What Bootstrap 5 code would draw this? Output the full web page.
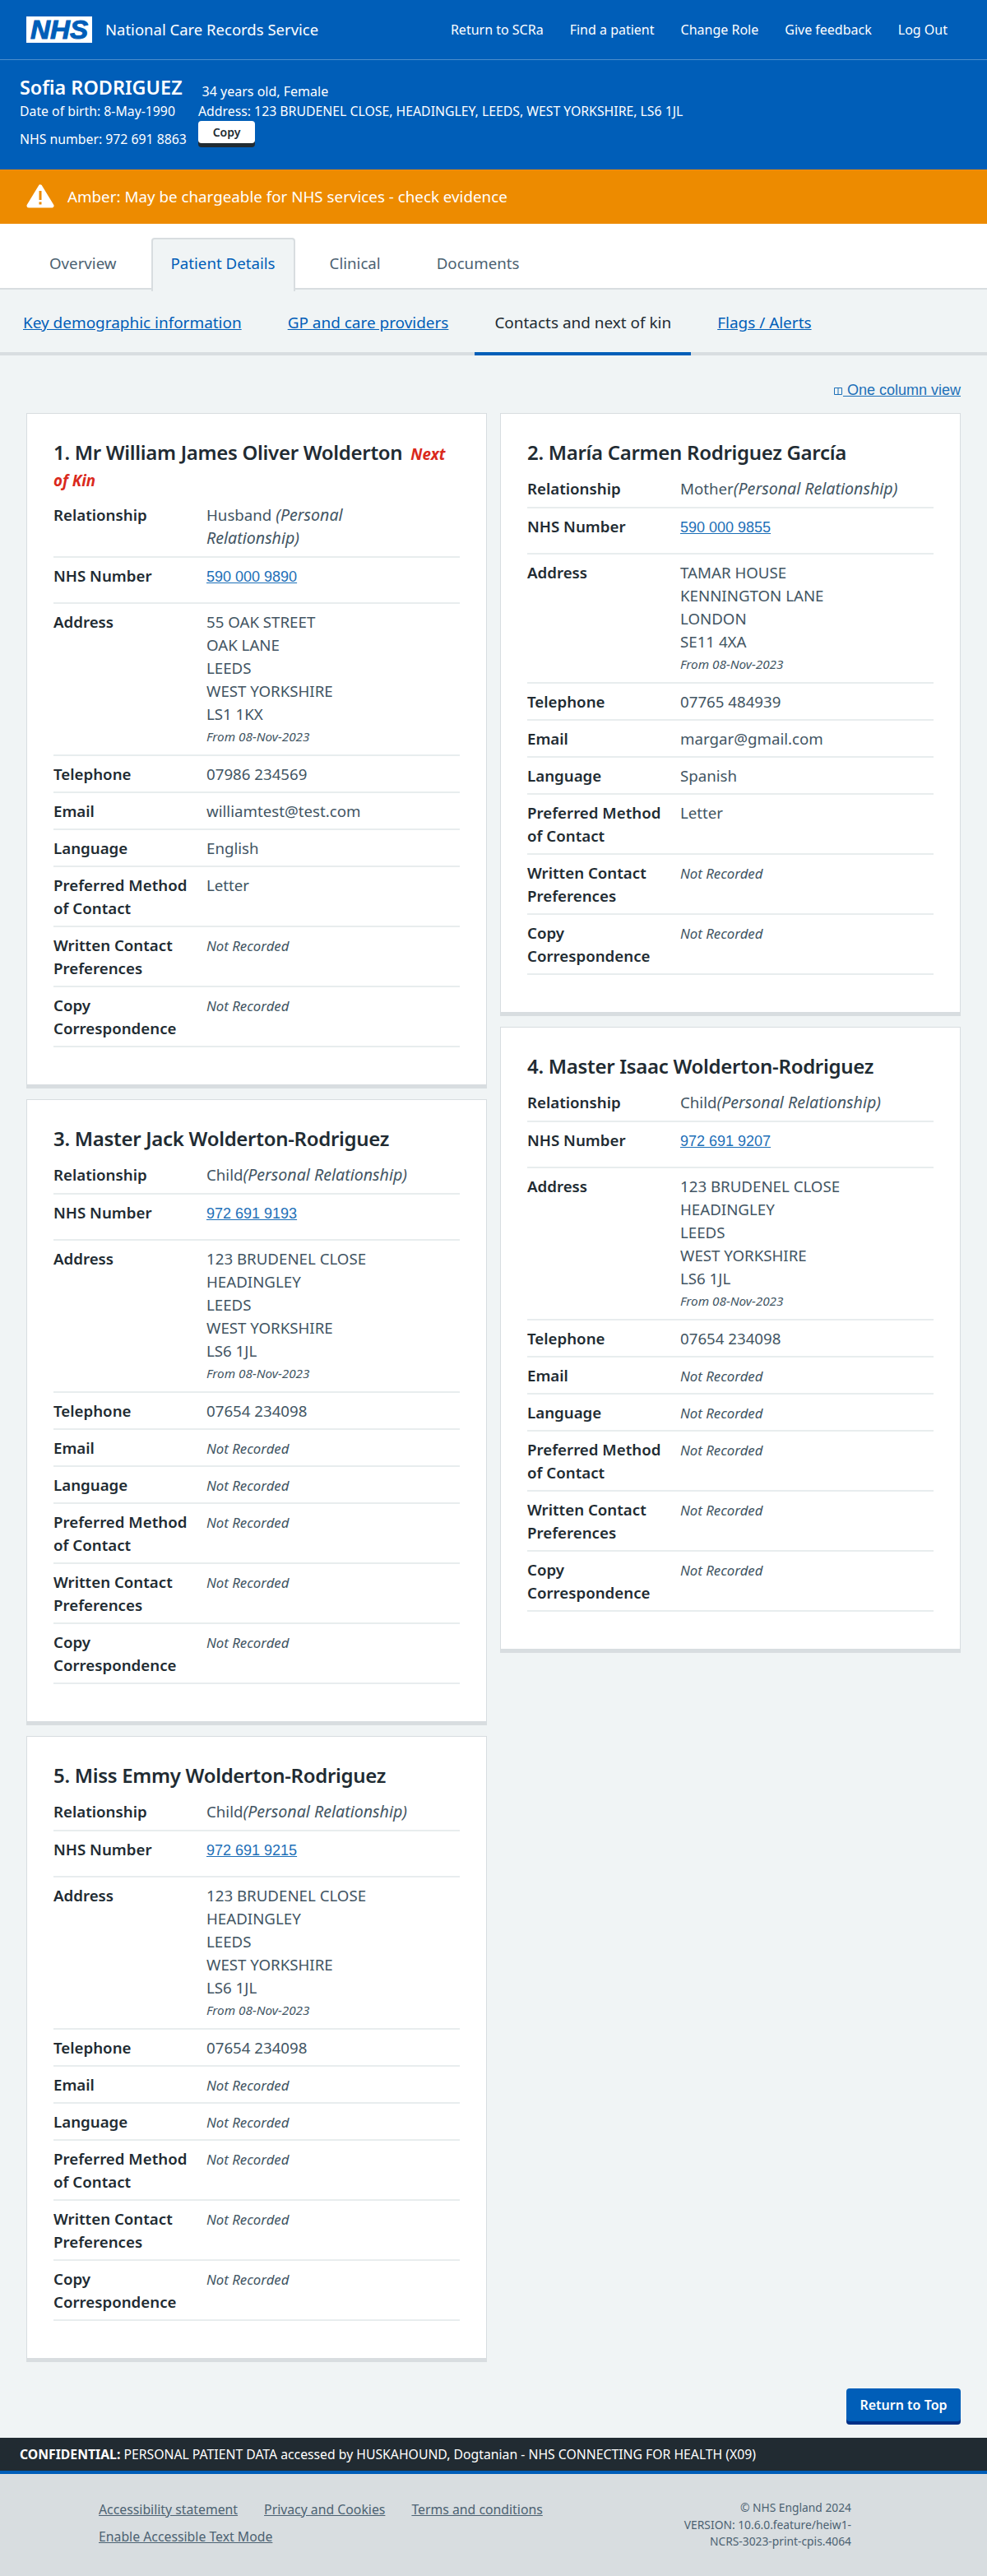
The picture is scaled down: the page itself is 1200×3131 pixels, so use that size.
<!DOCTYPE html>
<html lang="en">
<head>
<meta charset="utf-8">
<title>National Care Records Service</title>
<link href="https://cdn.jsdelivr.net/npm/bootstrap@5.3.0/dist/css/bootstrap.min.css" rel="stylesheet">
<style>
body{font-family:"Noto Sans","Open Sans",sans-serif;background:#f0f4f5;color:#212b32;font-size:18.7px;line-height:28px;}
a{color:#005eb8;}
.top-band{background:#005eb8;color:#fff;}
.brand-bar{height:73px;border-bottom:1px solid rgba(255,255,255,.3);padding:0 32px;}
.brand-name{font-size:18.5px;margin-left:16px;}
.top-link{color:#fff;font-size:16px;text-decoration:none;margin-left:32px;}
.top-links{padding-right:16px;}
.logo-box{display:block;width:80px;height:32px;}
.patient-band{padding:16px 24px 0;height:133px;font-size:15.8px;line-height:24px;}
.patient-name{font-size:23.4px;font-weight:600;line-height:32px;margin:0;}
.age-text{font-size:16px;margin-left:24px;padding-top:10px;}
.detail-col{width:217px;flex:none;white-space:nowrap;}
.nhs-line{padding-top:10px;}
.copy-btn{background:#fff;color:#212b32;border:0;border-radius:4px;box-shadow:0 5px 0 #212b32;font-size:14px;font-weight:600;line-height:20px;width:69px;height:27px;padding:0;}
.amber-band{background:#ed8b00;color:#fff;height:66px;padding:0 32px;font-size:18.8px;}
.amber-band svg{margin-right:16px;}
.main-tabs{background:#fff;height:80px;border-bottom:2px solid #d8dde0;padding:17px 0 0 34px;}
.main-tab{display:block;height:63px;line-height:58px;padding:0 24px;margin-right:16px;color:#4c6272;text-decoration:none;font-size:18.7px;border:2px solid transparent;border-bottom:0;}
.main-tab.is-on{background:#f0f4f5;color:#005eb8;border-color:#d8dde0;border-radius:4px 4px 0 0;height:65px;margin-bottom:-2px;padding:0 22px;}
.sub-tabs{height:80px;border-bottom:4px solid #d8dde0;padding-left:4px;}
.sub-tab{display:block;height:80px;line-height:80px;padding:0 24px;margin-right:8px;font-size:18.95px;color:#005eb8;}
.sub-tab.is-on{color:#212b32;text-decoration:none;border-bottom:4px solid #005eb8;}
.view-row{padding:30px 32px 0;height:70px;text-align:right;font-family:"Liberation Sans",sans-serif;font-size:18px;line-height:24px;}
.view-row a{color:#1d70b8;}
.cols{padding:0 32px;gap:16px;align-items:flex-start;}
.person-col{flex:1 1 0;min-width:0;display:flex;flex-direction:column;gap:13px;}
.person{background:#fff;border:1px solid #d8dde0;border-bottom:0;box-shadow:0 5px 0 #d8dde0;padding:31px 32px 45px;margin-bottom:5px;}
.person-title{font-size:24px;font-weight:600;line-height:32px;margin:0 0 6px;letter-spacing:-.3px;}
.kin-tag{color:#da291c;font-size:18.7px;font-style:italic;font-weight:700;margin-left:4px;line-height:1;letter-spacing:0;}
.info-row{display:grid;grid-template-columns:186px 280px;border-bottom:2px solid #e8edee;padding:8px 0 7px;}
.info-row.head{padding-bottom:8px;}
.info-row.wide{padding-bottom:18px;}
.info-row.thick{padding-bottom:8px;}
.info-label{font-weight:600;color:#212b32;padding-right:6px;}
.info-val{color:#425563;}
.info-val em{color:#425563;font-size:19.6px;line-height:1;}
.none-rec{font-size:16.8px;font-style:italic;color:#425563;line-height:1;}
.from-line{display:block;font-size:15.300px;font-style:italic;line-height:27px;height:27px;}
.nhs-num{font-family:"Liberation Sans",sans-serif;font-size:18px;color:#1d70b8;line-height:1;}
.top-btn-row{padding:0 32px;height:60px;margin-top:32px;}
.top-btn{background:#005eb8;color:#fff;border:0;border-radius:4px;box-shadow:0 4px 0 #003087;height:40px;width:139px;font-size:16px;font-weight:600;padding:0;}
.conf-band{background:#212b32;color:#fff;height:44px;border-bottom:4px solid #005eb8;padding:0 24px;font-size:15.75px;line-height:40px;}
.foot-band{background:#d8dde0;height:124px;padding:26px 165px 0 120px;color:#4c6272;}
.foot-link{color:#4c6272;font-size:15.8px;margin-right:32px;}
.foot-links{width:620px;line-height:32px;}
.foot-note{font-size:13.8px;line-height:20.5px;text-align:right;width:210px;margin-top:5px;}
</style>
</head>
<body>
<div class="top-band">
  <div class="brand-bar d-flex align-items-center justify-content-between">
    <div class="d-flex align-items-center">
      <svg class="logo-box" viewBox="0 0 80 32" role="img" aria-label="NHS"><rect width="80" height="32" fill="#fff"/><text x="40" y="27" text-anchor="middle" font-family="Liberation Sans" font-size="31" font-weight="700" font-style="italic" fill="#005eb8" stroke="#005eb8" stroke-width="1" textLength="70" lengthAdjust="spacingAndGlyphs">NHS</text></svg>
      <span class="brand-name">National Care Records Service</span>
    </div>
    <nav class="top-links d-flex">
      <a class="top-link" href="#">Return to SCRa</a>
      <a class="top-link" href="#">Find a patient</a>
      <a class="top-link" href="#">Change Role</a>
      <a class="top-link" href="#">Give feedback</a>
      <a class="top-link" href="#">Log Out</a>
    </nav>
  </div>
  <div class="patient-band">
    <div class="d-flex align-items-center"><h1 class="patient-name">Sofia RODRIGUEZ</h1><span class="age-text">34 years old, Female</span></div>
    <div class="d-flex"><span class="detail-col">Date of birth: 8-May-1990</span><span>Address: 123 BRUDENEL CLOSE, HEADINGLEY, LEEDS, WEST YORKSHIRE, LS6 1JL</span></div>
    <div class="d-flex align-items-start"><span class="detail-col nhs-line">NHS number: 972 691 8863</span><button class="copy-btn" type="button">Copy</button></div>
  </div>
</div>
<div class="amber-band d-flex align-items-center">
  <svg width="34" height="32" viewBox="0 0 34 32" aria-hidden="true"><path d="M17 4 L31 27 H3 Z" fill="#fff" stroke="#fff" stroke-width="5" stroke-linejoin="round"/><rect x="15.500" y="9" width="3" height="11" fill="#ed8b00"/><rect x="15.500" y="22.500" width="3" height="3" fill="#ed8b00"/></svg>
  <span>Amber: May be chargeable for NHS services - check evidence</span>
</div>
<div class="main-tabs d-flex">
  <a class="main-tab" href="#">Overview</a>
  <a class="main-tab is-on" href="#">Patient Details</a>
  <a class="main-tab" href="#">Clinical</a>
  <a class="main-tab" href="#">Documents</a>
</div>
<div class="sub-tabs d-flex">
  <a class="sub-tab" href="#">Key demographic information</a>
  <a class="sub-tab" href="#">GP and care providers</a>
  <a class="sub-tab is-on" href="#">Contacts and next of kin</a>
  <a class="sub-tab" href="#">Flags / Alerts</a>
</div>
<div class="view-row"><a href="#"><svg width="12" height="11" viewBox="0 0 12 11" aria-hidden="true"><path d="M1.500 1.500h9v8h-9zM6 1.500v8" fill="none" stroke="#1d70b8"/></svg> One column view</a></div>
<div class="cols d-flex">
  <div class="person-col">
    <section class="person">
      <h2 class="person-title">1. Mr William James Oliver Wolderton <span class="kin-tag">Next of Kin</span></h2>
      <div class="info-row head"><div class="info-label">Relationship</div><div class="info-val">Husband <em>(Personal Relationship)</em></div></div>
      <div class="info-row wide"><div class="info-label">NHS Number</div><div class="info-val"><a class="nhs-num" href="#">590 000 9890</a></div></div>
      <div class="info-row thick"><div class="info-label">Address</div><div class="info-val">55 OAK STREET<br>OAK LANE<br>LEEDS<br>WEST YORKSHIRE<br>LS1 1KX<span class="from-line">From 08-Nov-2023</span></div></div>
      <div class="info-row"><div class="info-label">Telephone</div><div class="info-val">07986 234569</div></div>
      <div class="info-row"><div class="info-label">Email</div><div class="info-val">williamtest@test.com</div></div>
      <div class="info-row"><div class="info-label">Language</div><div class="info-val">English</div></div>
      <div class="info-row"><div class="info-label">Preferred Method of Contact</div><div class="info-val">Letter</div></div>
      <div class="info-row"><div class="info-label">Written Contact Preferences</div><div class="info-val"><span class="none-rec">Not Recorded</span></div></div>
      <div class="info-row"><div class="info-label">Copy Correspondence</div><div class="info-val"><span class="none-rec">Not Recorded</span></div></div>
    </section>
    <section class="person">
      <h2 class="person-title">3. Master Jack Wolderton-Rodriguez</h2>
      <div class="info-row head"><div class="info-label">Relationship</div><div class="info-val">Child<em>(Personal Relationship)</em></div></div>
      <div class="info-row wide"><div class="info-label">NHS Number</div><div class="info-val"><a class="nhs-num" href="#">972 691 9193</a></div></div>
      <div class="info-row thick"><div class="info-label">Address</div><div class="info-val">123 BRUDENEL CLOSE<br>HEADINGLEY<br>LEEDS<br>WEST YORKSHIRE<br>LS6 1JL<span class="from-line">From 08-Nov-2023</span></div></div>
      <div class="info-row"><div class="info-label">Telephone</div><div class="info-val">07654 234098</div></div>
      <div class="info-row"><div class="info-label">Email</div><div class="info-val"><span class="none-rec">Not Recorded</span></div></div>
      <div class="info-row"><div class="info-label">Language</div><div class="info-val"><span class="none-rec">Not Recorded</span></div></div>
      <div class="info-row"><div class="info-label">Preferred Method of Contact</div><div class="info-val"><span class="none-rec">Not Recorded</span></div></div>
      <div class="info-row"><div class="info-label">Written Contact Preferences</div><div class="info-val"><span class="none-rec">Not Recorded</span></div></div>
      <div class="info-row"><div class="info-label">Copy Correspondence</div><div class="info-val"><span class="none-rec">Not Recorded</span></div></div>
    </section>
    <section class="person">
      <h2 class="person-title">5. Miss Emmy Wolderton-Rodriguez</h2>
      <div class="info-row head"><div class="info-label">Relationship</div><div class="info-val">Child<em>(Personal Relationship)</em></div></div>
      <div class="info-row wide"><div class="info-label">NHS Number</div><div class="info-val"><a class="nhs-num" href="#">972 691 9215</a></div></div>
      <div class="info-row thick"><div class="info-label">Address</div><div class="info-val">123 BRUDENEL CLOSE<br>HEADINGLEY<br>LEEDS<br>WEST YORKSHIRE<br>LS6 1JL<span class="from-line">From 08-Nov-2023</span></div></div>
      <div class="info-row"><div class="info-label">Telephone</div><div class="info-val">07654 234098</div></div>
      <div class="info-row"><div class="info-label">Email</div><div class="info-val"><span class="none-rec">Not Recorded</span></div></div>
      <div class="info-row"><div class="info-label">Language</div><div class="info-val"><span class="none-rec">Not Recorded</span></div></div>
      <div class="info-row"><div class="info-label">Preferred Method of Contact</div><div class="info-val"><span class="none-rec">Not Recorded</span></div></div>
      <div class="info-row"><div class="info-label">Written Contact Preferences</div><div class="info-val"><span class="none-rec">Not Recorded</span></div></div>
      <div class="info-row"><div class="info-label">Copy Correspondence</div><div class="info-val"><span class="none-rec">Not Recorded</span></div></div>
    </section>
  </div>
  <div class="person-col">
    <section class="person">
      <h2 class="person-title">2. María Carmen Rodriguez García</h2>
      <div class="info-row head"><div class="info-label">Relationship</div><div class="info-val">Mother<em>(Personal Relationship)</em></div></div>
      <div class="info-row wide"><div class="info-label">NHS Number</div><div class="info-val"><a class="nhs-num" href="#">590 000 9855</a></div></div>
      <div class="info-row thick"><div class="info-label">Address</div><div class="info-val">TAMAR HOUSE<br>KENNINGTON LANE<br>LONDON<br>SE11 4XA<span class="from-line">From 08-Nov-2023</span></div></div>
      <div class="info-row"><div class="info-label">Telephone</div><div class="info-val">07765 484939</div></div>
      <div class="info-row"><div class="info-label">Email</div><div class="info-val">margar@gmail.com</div></div>
      <div class="info-row"><div class="info-label">Language</div><div class="info-val">Spanish</div></div>
      <div class="info-row"><div class="info-label">Preferred Method of Contact</div><div class="info-val">Letter</div></div>
      <div class="info-row"><div class="info-label">Written Contact Preferences</div><div class="info-val"><span class="none-rec">Not Recorded</span></div></div>
      <div class="info-row"><div class="info-label">Copy Correspondence</div><div class="info-val"><span class="none-rec">Not Recorded</span></div></div>
    </section>
    <section class="person">
      <h2 class="person-title">4. Master Isaac Wolderton-Rodriguez</h2>
      <div class="info-row head"><div class="info-label">Relationship</div><div class="info-val">Child<em>(Personal Relationship)</em></div></div>
      <div class="info-row wide"><div class="info-label">NHS Number</div><div class="info-val"><a class="nhs-num" href="#">972 691 9207</a></div></div>
      <div class="info-row thick"><div class="info-label">Address</div><div class="info-val">123 BRUDENEL CLOSE<br>HEADINGLEY<br>LEEDS<br>WEST YORKSHIRE<br>LS6 1JL<span class="from-line">From 08-Nov-2023</span></div></div>
      <div class="info-row"><div class="info-label">Telephone</div><div class="info-val">07654 234098</div></div>
      <div class="info-row"><div class="info-label">Email</div><div class="info-val"><span class="none-rec">Not Recorded</span></div></div>
      <div class="info-row"><div class="info-label">Language</div><div class="info-val"><span class="none-rec">Not Recorded</span></div></div>
      <div class="info-row"><div class="info-label">Preferred Method of Contact</div><div class="info-val"><span class="none-rec">Not Recorded</span></div></div>
      <div class="info-row"><div class="info-label">Written Contact Preferences</div><div class="info-val"><span class="none-rec">Not Recorded</span></div></div>
      <div class="info-row"><div class="info-label">Copy Correspondence</div><div class="info-val"><span class="none-rec">Not Recorded</span></div></div>
    </section>
  </div>
</div>
<div class="top-btn-row d-flex justify-content-end align-items-start"><button class="top-btn" type="button">Return to Top</button></div>
<div class="conf-band"><strong>CONFIDENTIAL:</strong> PERSONAL PATIENT DATA accessed by HUSKAHOUND, Dogtanian - NHS CONNECTING FOR HEALTH (X09)</div>
<footer class="foot-band d-flex justify-content-between">
  <div class="foot-links">
    <a class="foot-link" href="#">Accessibility statement</a><a class="foot-link" href="#">Privacy and Cookies</a><a class="foot-link" href="#">Terms and conditions</a><br>
    <a class="foot-link" href="#">Enable Accessible Text Mode</a>
  </div>
  <div class="foot-note">© NHS England 2024<br>VERSION: 10.6.0.feature/heiw1-NCRS-3023-print-cpis.4064</div>
</footer>
</body>
</html>
